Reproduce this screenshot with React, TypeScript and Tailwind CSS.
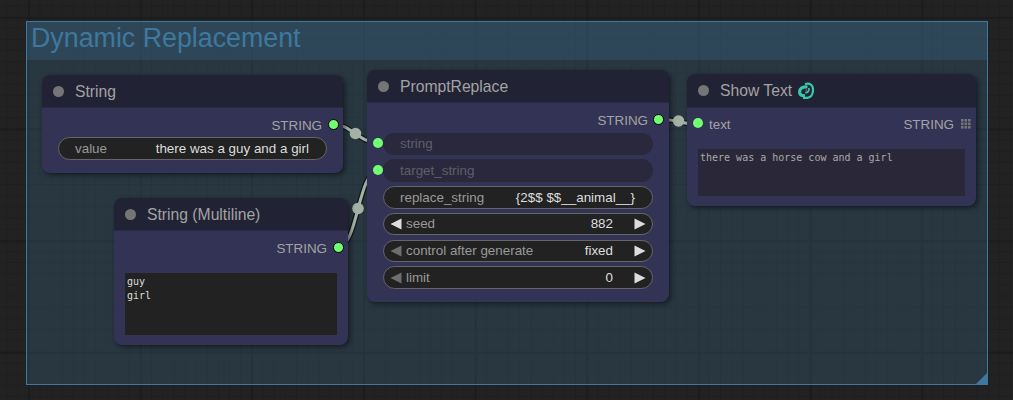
const sans = "font-['Liberation_Sans',Arial,sans-serif]";
const wireStroke = "#a3b2a5";

function Dot({ className }: { className: string }) {
  return <div className={`absolute w-[10px] h-[10px] rounded-full bg-[#70ff70] ${className}`} />;
}

function OutputDot({ className }: { className: string }) {
  return <div className={`absolute w-[11px] h-[11px] rounded-full bg-[#70ff70] border border-black box-border ${className}`} />;
}

function NodeTitle({ title, tall, children }: { title: string; tall?: boolean; children?: React.ReactNode }) {
  return (
    <div className={`${tall ? "h-[34px]" : "h-[33px]"} shrink-0 flex items-center rounded-t-[8px] bg-[#222235] border-b border-[#2a2842] pl-[11px]`}>
      <div className="w-[11px] h-[11px] rounded-full bg-[#757575]" />
      <span className="ml-[11px] pt-[1px] text-[15.7px] text-[#a3a3a3] leading-none">{title}</span>
      {children}
    </div>
  );
}

function Widget({ label, value, arrows, dim }: { label: string; value: string; arrows?: boolean; dim?: boolean }) {
  return (
    <div className="h-[22.5px] flex items-center rounded-full bg-[#222222] border border-[#666666] text-[13.4px] leading-none">
      {arrows ? (
        <svg width="12" height="12" viewBox="0 0 12 12" className="ml-[6px] mr-[4px] shrink-0">
          <path d="M0.5 6 L11.5 0.5 V11.5 Z" fill={dim ? "#6e6e6e" : "#dddddd"} />
        </svg>
      ) : (
        <span className="w-[16px] shrink-0" />
      )}
      <span className="text-[#999999]">{label}</span>
      <span className={`ml-auto text-[#dddddd] ${arrows ? "" : "pr-[17px]"}`}>{value}</span>
      {arrows && (
        <svg width="12" height="12" viewBox="0 0 12 12" className="ml-[21px] mr-[6px] shrink-0">
          <path d="M11.5 6 L0.5 0.5 V11.5 Z" fill="#dddddd" />
        </svg>
      )}
    </div>
  );
}

function Wire({ d }: { d: string }) {
  return (
    <>
      <path d={d} stroke="#000" strokeOpacity="0.6" strokeWidth="5.5" />
      <path d={d} stroke={wireStroke} strokeWidth="3" />
    </>
  );
}

function Wires() {
  return (
    <svg className="absolute inset-0" width="1013" height="400" viewBox="0 0 1013 400" fill="none">
      <Wire d="M333 124 C 350 124, 360 143, 378 143" />
      <Wire d="M338 247 C 358 247, 358 171, 378 171" />
      <Wire d="M658 119 C 675 119, 680 124, 698 124" />
      <circle cx="355.5" cy="133.5" r="5.8" fill={wireStroke} />
      <circle cx="358" cy="208.5" r="5.8" fill={wireStroke} />
      <circle cx="678.5" cy="121" r="5.8" fill={wireStroke} />
    </svg>
  );
}

export default function App() {
  return (
    <div
      className={`relative w-[1013px] h-[400px] overflow-hidden bg-[#222222] ${sans} bg-[linear-gradient(#1c1c1c_2px,transparent_2px),linear-gradient(90deg,#1c1c1c_2px,transparent_2px),linear-gradient(#1e1e1e_1px,transparent_1px),linear-gradient(90deg,#1e1e1e_1px,transparent_1px)] bg-[size:111.7px_111.7px,111.7px_111.7px,11.17px_11.17px,11.17px_11.17px] bg-[position:28px_17px,28px_17px,6px_5.5px,6px_5.5px]`}
    >
      {/* group */}
      <div className="absolute left-[26px] top-[21px] w-[962px] h-[364px] bg-[#3f789e]/25 border border-[#3f789e]">
        <div className="h-[38px] bg-[#3f789e]/25 pl-[4px] text-[26.8px] leading-[33px] text-[#3f789e]">Dynamic Replacement</div>
        <div className="absolute right-0 bottom-0 w-[11px] h-[11px] bg-[#3f789e] [clip-path:polygon(100%_0,100%_100%,0_100%)]" />
      </div>

      <Wires />

      {/* String */}
      <div className="absolute left-[42px] top-[75px] w-[301px] h-[98px] flex flex-col rounded-[8px] bg-[#333355] shadow-[2px_2px_5px_rgba(0,0,0,0.5)]">
        <NodeTitle title="String" />
        <div className="h-[29px] pt-[10px] pr-[21px] text-right text-[13.4px] leading-[16px] text-[#a3a3a3]">STRING</div>
        <div className="px-[16px]">
          <Widget label="value" value="there was a guy and a girl" />
        </div>
        <OutputDot className="left-[286px] top-[44px]" />
      </div>

      {/* String (Multiline) */}
      <div className="absolute left-[114px] top-[198px] w-[234px] h-[147px] flex flex-col rounded-[8px] bg-[#333355] shadow-[2px_2px_5px_rgba(0,0,0,0.5)]">
        <NodeTitle title="String (Multiline)" />
        <div className="h-[42px] pt-[10px] pr-[21px] text-right text-[13.4px] leading-[16px] text-[#a3a3a3]">STRING</div>
        <div className="mx-[11px] h-[62px] bg-[#222222] px-[2px] pt-[2px] font-['DejaVu_Sans_Mono',monospace] text-[10px] leading-[14px] text-[#dddddd]">
          guy
          <br />
          girl
        </div>
        <OutputDot className="left-[219px] top-[44px]" />
      </div>

      {/* PromptReplace */}
      <div className="absolute left-[367px] top-[70px] w-[302px] h-[232px] flex flex-col rounded-[8px] bg-[#333355] shadow-[2px_2px_5px_rgba(0,0,0,0.5)]">
        <NodeTitle title="PromptReplace" />
        <div className="h-[29.5px] pt-[10px] pr-[21px] text-right text-[13.4px] leading-[16px] text-[#a3a3a3]">STRING</div>
        <div className="flex flex-col gap-[4.3px] px-[16px]">
          {["string", "target_string"].map((label) => (
            <div key={label} className="h-[22.5px] flex items-center rounded-full bg-[#29283d] pl-[17px] text-[13.4px] leading-none text-[#5f5f68]">
              {label}
            </div>
          ))}
          <Widget label="replace_string" value="{2$$ $$__animal__}" />
          <Widget label="seed" value="882" arrows />
          <Widget label="control after generate" value="fixed" arrows dim />
          <Widget label="limit" value="0" arrows dim />
        </div>
        <OutputDot className="left-[286px] top-[44px]" />
        <Dot className="left-[6px] top-[68px]" />
        <Dot className="left-[6px] top-[95px]" />
      </div>

      {/* Show Text */}
      <div className="absolute left-[687px] top-[74px] w-[289px] h-[132px] flex flex-col rounded-[8px] bg-[#333355] shadow-[2px_2px_5px_rgba(0,0,0,0.5)]">
        <NodeTitle title="Show Text" tall>
          <svg width="16" height="17" viewBox="0 0 16 17" fill="none" className="ml-[6px]">
            <path d="M9.5 5 C4 4.2 1.6 7 1.6 10 C1.6 13 4 14 7 13.6" stroke="#38c9a6" strokeWidth="3.2" />
            <path d="M7 2 C12 0.8 15 2.8 15 7.5 C15 11.5 14.5 15 9.5 15.8 L5 15.8" stroke="#38c9a6" strokeWidth="2.2" />
            <path d="M10.8 6 C11.6 9 9.5 11 7.2 10.4" stroke="#38c9a6" strokeWidth="1.8" />
            <path d="M8.2 7.2 V9" stroke="#d946a8" strokeWidth="1" />
          </svg>
        </NodeTitle>
        <div className="h-[41px] flex items-start pt-[9px] pl-[22px] pr-[5px] text-[13.4px] leading-[16px] text-[#a3a3a3]">
          <span>text</span>
          <span className="ml-auto">STRING</span>
          <svg width="10" height="10" viewBox="0 0 10 10" fill="#757575" className="ml-[7px] mt-[2px]">
            {[0, 3.5, 7].flatMap((y) => [0, 3.5, 7].map((x) => <rect key={`${x}-${y}`} x={x} y={y} width="2.6" height="2.6" />))}
          </svg>
        </div>
        <div className="mx-[11px] h-[47px] bg-[#2a2838] px-[2px] pt-[2px] font-['DejaVu_Sans_Mono',monospace] text-[10px] leading-[14px] text-[#a8a8a8]">
          there was a horse cow and a girl
        </div>
        <Dot className="left-[6px] top-[44px]" />
      </div>
    </div>
  );
}
